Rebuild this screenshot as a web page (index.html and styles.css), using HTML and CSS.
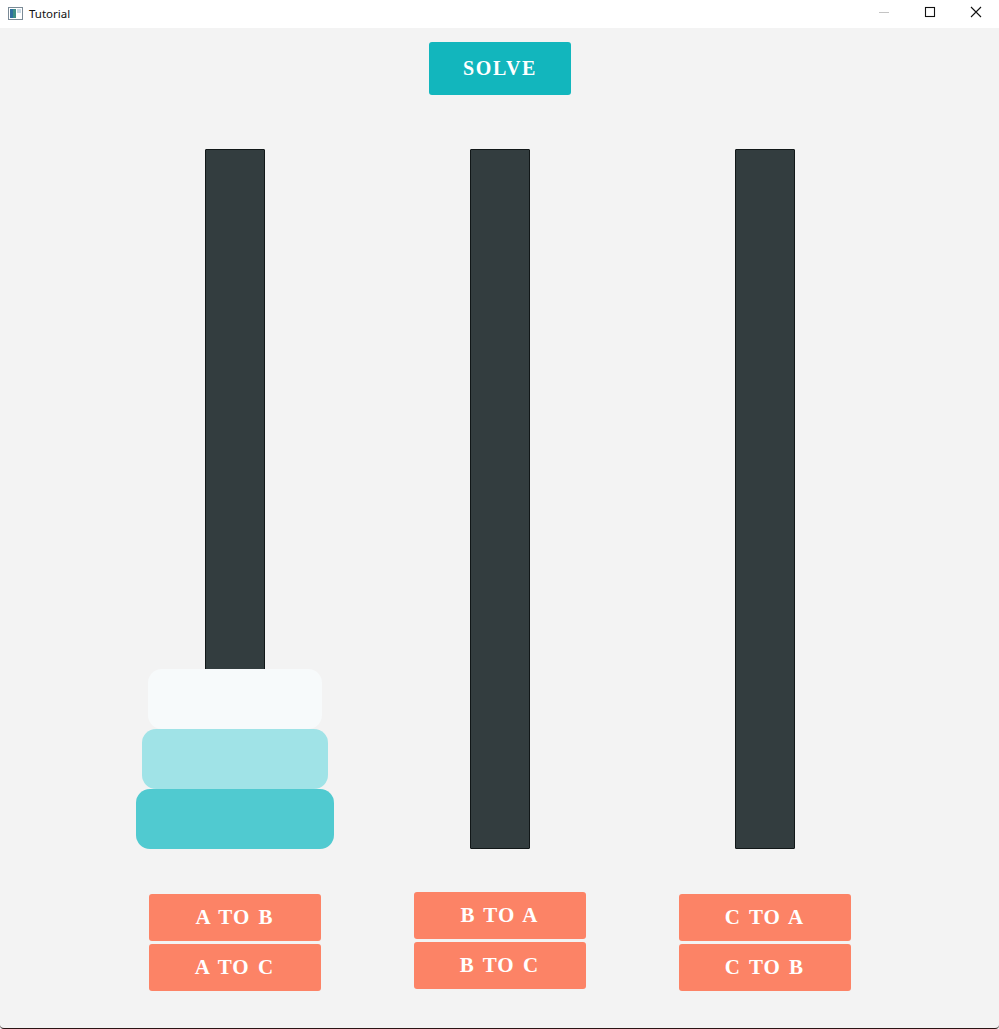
FILE: index.html
```html
<!DOCTYPE html>
<html>
<head>
<meta charset="utf-8">
<title>Tutorial</title>
<link rel="stylesheet" href="styles.css">
</head>
<body>
<div class="window">
  <header class="titlebar">
    <div class="title">
      <svg class="app-icon" width="15" height="13" viewBox="0 0 15 13">
        <rect x="0.5" y="0.5" width="14" height="12" fill="#fff" stroke="#7a8a96"/>
        <rect x="2" y="2" width="6" height="9" fill="#3d8f86"/>
        <rect x="2" y="2" width="3" height="9" fill="#2f6fa0"/>
        <rect x="9" y="2" width="4" height="4" fill="#c9d9e4"/>
      </svg>
      <span class="title-text">Tutorial</span>
    </div>
    <div class="controls">
      <span class="ctl min"><svg width="12" height="12" viewBox="0 0 12 12"><line x1="1" y1="6.5" x2="11" y2="6.5" stroke="#c4c4c4" stroke-width="1"/></svg></span>
      <span class="ctl max"><svg width="12" height="12" viewBox="0 0 12 12"><rect x="1.5" y="1.5" width="9" height="9" fill="none" stroke="#111" stroke-width="1.1"/></svg></span>
      <span class="ctl close"><svg width="12" height="12" viewBox="0 0 12 12"><path d="M1 1 L11 11 M11 1 L1 11" stroke="#111" stroke-width="1.1"/></svg></span>
    </div>
  </header>
  <main class="content">
    <button class="solve">SOLVE</button>
    <div class="board">
      <section class="column">
        <div class="tower">
          <div class="peg"></div>
          <div class="disks">
            <div class="disk disk-1"></div>
            <div class="disk disk-2"></div>
            <div class="disk disk-3"></div>
          </div>
        </div>
        <div class="moves moves-a">
          <button class="move">A TO B</button>
          <button class="move">A TO C</button>
        </div>
      </section>
      <section class="column">
        <div class="tower">
          <div class="peg"></div>
          <div class="disks"></div>
        </div>
        <div class="moves moves-b">
          <button class="move">B TO A</button>
          <button class="move">B TO C</button>
        </div>
      </section>
      <section class="column">
        <div class="tower">
          <div class="peg"></div>
          <div class="disks"></div>
        </div>
        <div class="moves moves-c">
          <button class="move">C TO A</button>
          <button class="move">C TO B</button>
        </div>
      </section>
    </div>
  </main>
</div>
</body>
</html>
```
FILE: styles.css
```css
html, body {
  margin: 0;
  padding: 0;
  background: #f3f3f3;
}
.window {
  width: 999px;
  height: 1029px;
  box-sizing: border-box;
  display: flex;
  flex-direction: column;
  background: #f3f3f3;
  border-bottom: 1px solid #2a1414;
  border-radius: 0 0 4px 4px;
  overflow: hidden;
}
.titlebar {
  height: 28px;
  flex: 0 0 28px;
  background: #ffffff;
  display: flex;
  align-items: center;
  justify-content: space-between;
}
.title {
  display: flex;
  align-items: center;
  padding-left: 8px;
  gap: 6px;
}
.app-icon { display: block; margin-top: -2px; }
.title-text {
  font-family: "Noto Sans", "Open Sans", sans-serif;
  font-size: 11.5px;
  color: #111;
  margin-top: -2px;
}
.controls {
  display: flex;
  height: 28px;
  align-items: center;
  margin-top: -4px;
}
.ctl {
  width: 46px;
  display: flex;
  justify-content: center;
}
.ctl svg { display: block; }
.content {
  flex: 1;
  display: flex;
  flex-direction: column;
  align-items: center;
  padding-top: 14px;
}
.solve {
  width: 142px;
  height: 53px;
  border: none;
  border-radius: 3px;
  background: #12b6bd;
  color: #ffffff;
  font-family: "Liberation Serif", serif;
  font-weight: bold;
  font-size: 20px;
  letter-spacing: 1.6px;
  padding: 0;
  margin-left: 1px;
}
.board {
  margin-top: 54px;
  display: grid;
  grid-template-columns: repeat(3, 265px);
  justify-content: center;
}
.column {
  display: flex;
  flex-direction: column;
  align-items: center;
}
.tower {
  display: grid;
  width: 265px;
  height: 700px;
  justify-items: center;
}
.peg, .disks {
  grid-area: 1 / 1;
}
.peg {
  width: 60px;
  height: 700px;
  box-sizing: border-box;
  background: #333d3f;
  border: 1px solid #111718;
  border-radius: 1px;
}
.disks {
  align-self: end;
  display: flex;
  flex-direction: column;
  align-items: center;
}
.disk {
  height: 60px;
  border-radius: 14px;
}
.disk-1 { width: 174px; background: #f7fafb; }
.disk-2 { width: 186px; background: #a0e3e7; }
.disk-3 { width: 198px; background: #50cad0; }
.moves {
  display: flex;
  flex-direction: column;
  gap: 3px;
}
.moves-a { margin-top: 45px; }
.moves-b { margin-top: 43px; }
.moves-c { margin-top: 45px; }
.move {
  width: 172px;
  height: 47px;
  border: none;
  border-radius: 3px;
  background: #fc8366;
  color: #ffffff;
  font-family: "Liberation Serif", serif;
  font-weight: bold;
  font-size: 21px;
  letter-spacing: 1px;
  word-spacing: 2px;
  padding: 0;
}
```
